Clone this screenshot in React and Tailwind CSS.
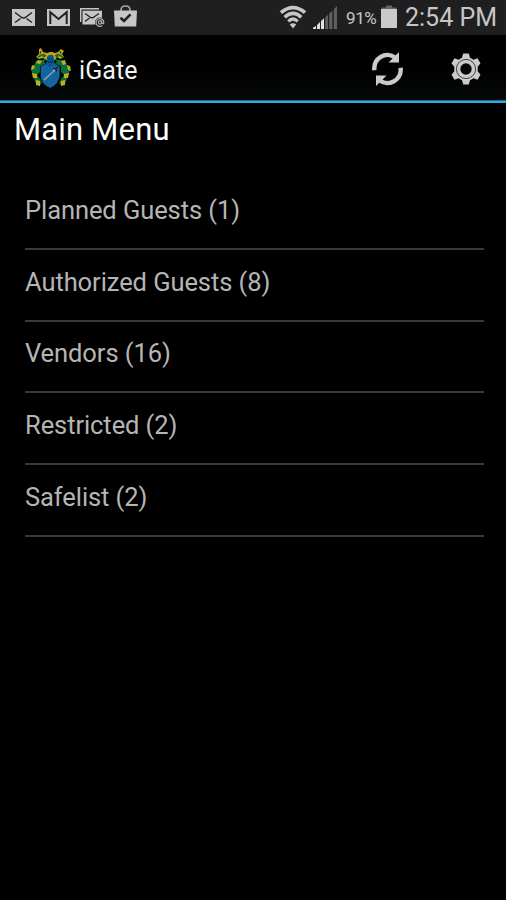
const menuItems = [
  { id: 'planned', label: 'Planned Guests', count: 1 },
  { id: 'authorized', label: 'Authorized Guests', count: 8 },
  { id: 'vendors', label: 'Vendors', count: 16 },
  { id: 'restricted', label: 'Restricted', count: 2 },
  { id: 'safelist', label: 'Safelist', count: 2 },
];

const MailIcon = () => (
  <svg width="23" height="17" viewBox="0 0 23 17" fill="none">
    <rect width="23" height="17" fill="#c6c6c6" />
    <path d="M3 3.5L9 8Q11.5 10 14 8L20 3.5M3 13.5L8.5 9.5M20 13.5L14.5 9.5" stroke="#222" strokeWidth="1.5" />
  </svg>
);

const GmailIcon = () => (
  <svg width="23" height="17" viewBox="0 0 23 17" fill="none">
    <rect width="23" height="17" fill="#c6c6c6" />
    <path d="M3.3 15V3.2L11.5 10L19.7 3.2V15" stroke="#222" strokeWidth="2" />
  </svg>
);

const MailStackIcon = () => (
  <svg width="25" height="20" viewBox="0 0 25 20" fill="none">
    <path d="M0.7 14V0.7H19" stroke="#c6c6c6" strokeWidth="1.4" />
    <rect x="2.5" y="2.7" width="19.5" height="13.8" fill="#c6c6c6" />
    <path d="M5 5.5L10 9Q12 10.5 14 9L19 5.5M5 13.5L9.5 10" stroke="#222" strokeWidth="1.3" />
    <circle cx="20" cy="14.5" r="5" fill="#222" />
    <circle cx="20" cy="14.5" r="1.6" stroke="#b4b4b4" strokeWidth="1.1" />
    <path d="M21.7 12.7V15.2Q23.8 16.5 23.8 14.2A3.9 3.9 0 1 0 22.3 17.6" stroke="#b4b4b4" strokeWidth="1.2" />
  </svg>
);

const StoreIcon = () => (
  <svg width="23" height="22" viewBox="0 0 23 22" fill="none">
    <path d="M7 6.5V5Q7 1 11.5 1T16 5V6.5" stroke="#aaa" strokeWidth="1.6" />
    <path d="M0 5.5H23L22.2 21.5H0.8Z" fill="#c6c6c6" />
    <path d="M6.5 12.8L10 16L16.5 9.3" stroke="#222" strokeWidth="2.6" />
  </svg>
);

const WifiIcon = () => (
  <svg width="28" height="24" viewBox="0 0 28 24" fill="none" stroke="#c6c6c6">
    <path d="M2 7.6Q14 -2.4 26 7.6" strokeWidth="3.8" />
    <path d="M5.7 12.2Q14 4.6 22.3 12.2" strokeWidth="3.5" />
    <path d="M9.3 16.3Q14 11.6 18.7 16.3" strokeWidth="3.2" />
    <path d="M10.8 19.6Q14 17 17.2 19.6L14 23.5Z" fill="#c6c6c6" stroke="none" />
  </svg>
);

const SignalIcon = () => (
  <svg width="24" height="24" viewBox="0 0 24 24">
    <path d="M0 23V21.8L3 20V23ZM4 23V19L7 16V23ZM8 23V15L11 12.2V23Z" fill="#e0e0e0" />
    <path d="M12.2 23V11.5L15 8.8V23ZM16.2 23V7.7L19.4 4.6V23ZM20.8 23V3.2L24 0V23Z" fill="#606060" />
  </svg>
);

const BatteryIcon = () => (
  <svg width="16" height="23" viewBox="0 0 16 23">
    <path d="M5 0.5H11V2.5H15.5V4H0.5V2.5H5Z" fill="#646464" />
    <rect y="4" width="16" height="19" fill="#cacaca" />
  </svg>
);

// Coat of arms used as the app logo
const Crest = () => (
  <svg width="42" height="42" viewBox="0 0 42 42" fill="none">
    <path d="M11 12L6 13L4 17L1 20L2 26L4 30L5 34L9 38L12 35L10 31L7 27L10 24V18L15 16L14 12Z" fill="#0b6f3c" />
    <path d="M30 12L35 13L37 17L40 20L39 26L37 30L36 34L32 38L29 35L31 31L34 27L31 24V18L26 16L27 12Z" fill="#0b6f3c" />
    <path d="M9 1L11 0L13 4L17 5L20 4L22 4L25 5L28 4L31 1L34 3L32 6L34 9L30 11L27 9L25 12H16L13 10L9 11L6 9L9 6Z" fill="#bda51b" />
    <path d="M8 9L12 7L15 9M33 9L29 7L26 9M12 13L16 11.5M29 13L25 11.5" stroke="#0b6f3c" strokeWidth="1.6" />
    <path d="M13 6L16 8M28 6L25 8M11 3L10 6M30 3L31 6" stroke="#171607" strokeWidth="0.8" />
    <path d="M8 12L12 13L10 16L6 15ZM31 13L35 12L36 16L33 17ZM2 17L5 18L4 21L1 22ZM37 17L40 18L41 23L38 22ZM2 25L7 26L7 30L3 30ZM34 26L39 25L38 30L34 30ZM6 32L10 33L10 38L6 37ZM31 33L35 32L35 37L31 38Z" fill="#c2ad1d" />
    <path d="M14 17L17 14L17 9L19 7H23L24 10L24 14L27 17Z" fill="#075a91" />
    <path d="M18 11H20M21 11H23M18 14H23" stroke="#032c4a" />
    <path d="M10.7 18L15 16.5L20.2 17.5L25 16.5L29.7 18V27Q29 36 20.2 40Q11 36 10.7 28Z" fill="#12659f" />
    <path d="M14 32L25.5 21.5" stroke="#97a0a8" strokeWidth="1.5" />
    <path d="M23.5 19.8L27 23.3M25.5 21.5L28 18.8" stroke="#172431" strokeWidth="1.5" />
    <circle cx="24.3" cy="22.3" r="0.9" fill="#b3b9bc" />
  </svg>
);

const RefreshIcon = () => (
  <svg width="32" height="34" viewBox="0 0 32 34" fill="none">
    <path d="M2.4 18.3A13 13.8 0 0 1 23 5.6M28.6 15.7A13 13.8 0 0 1 8 28.4" stroke="#cbcbcb" strokeWidth="4.4" />
    <path d="M27 0V10.5H16.5ZM4 34V23.5H14.5Z" fill="#cbcbcb" />
  </svg>
);

const GearIcon = () => (
  <svg width="30" height="32" viewBox="0 0 30 32" fill="none">
    <path
      d="M12.2 0.5H17.8L19 4.7L22.5 6.7L26.5 5.3L29.5 10.2L26.7 13.8V18.2L29.5 21.8L26.5 26.7L22.5 25.3L19 27.3L17.8 31.5H12.2L11 27.3L7.5 25.3L3.5 26.7L0.5 21.8L3.3 18.2V13.8L0.5 10.2L3.5 5.3L7.5 6.7L11 4.7Z"
      fill="#cbcbcb"
    />
    <circle cx="15" cy="16" r="9.6" stroke="#333" strokeWidth="0.9" />
    <circle cx="15" cy="16" r="5.7" fill="#050606" />
  </svg>
);

const StatusBar = () => (
  <div className="flex h-[35px] shrink-0 items-start bg-[#1f1f1f] pl-3 text-[#c6c6c6]">
    <div className="flex w-[267px] items-start pt-[5px]">
      <div className="mt-1 w-[35px]"><MailIcon /></div>
      <div className="mt-1 w-[33px]"><GmailIcon /></div>
      <div className="mt-[3px] w-[34px]"><MailStackIcon /></div>
      <StoreIcon />
    </div>
    <div className="mt-[5px] w-[34px]"><WifiIcon /></div>
    <div className="mt-[6px] w-[33px]"><SignalIcon /></div>
    <span className="mt-[8px] w-[35px] text-[17px] leading-5 tracking-[-0.4px] whitespace-nowrap">91%</span>
    <div className="mt-[5px] w-6"><BatteryIcon /></div>
    <span className="mt-[4px] text-[25px] leading-7 whitespace-nowrap">2:54 PM</span>
  </div>
);

const ActionBar = () => (
  <header className="flex h-[65px] shrink-0 items-center bg-gradient-to-b from-black to-[#060808] pl-[30px] pr-[25px]">
    <div className="mt-[3px]"><Crest /></div>
    <h1 className="ml-[7px] mt-[7px] flex-1 text-[25px] leading-8 tracking-[0.1px] text-[#f3f3f3]">iGate</h1>
    <button type="button" aria-label="Refresh" className="mt-[2px] mr-[47px]"><RefreshIcon /></button>
    <button type="button" aria-label="Settings" className="mt-[2px]"><GearIcon /></button>
  </header>
);

const App = () => {
  return (
    <div className="flex h-screen w-full flex-col overflow-hidden bg-black font-['Roboto',sans-serif]">
      <StatusBar />
      <ActionBar />
      <div className="h-[3px] shrink-0 border-t border-[#1b7193] bg-[#32a9da]" />
      <main>
        <h2 className="pl-[14px] pt-[7px] text-[31px] leading-10 tracking-[0.2px] text-white">Main Menu</h2>
        <ul className="mt-[28px] pl-[25px] pr-[22px]">
          {menuItems.map((item) => (
            <li
              key={item.id}
              className="flex h-[71.75px] items-center border-b-2 border-[#393939] pb-[6px] text-[25.5px] tracking-[-0.08px] text-[#b5b5b5]"
            >
              {item.label} ({item.count})
            </li>
          ))}
        </ul>
      </main>
    </div>
  );
};

export default App;
